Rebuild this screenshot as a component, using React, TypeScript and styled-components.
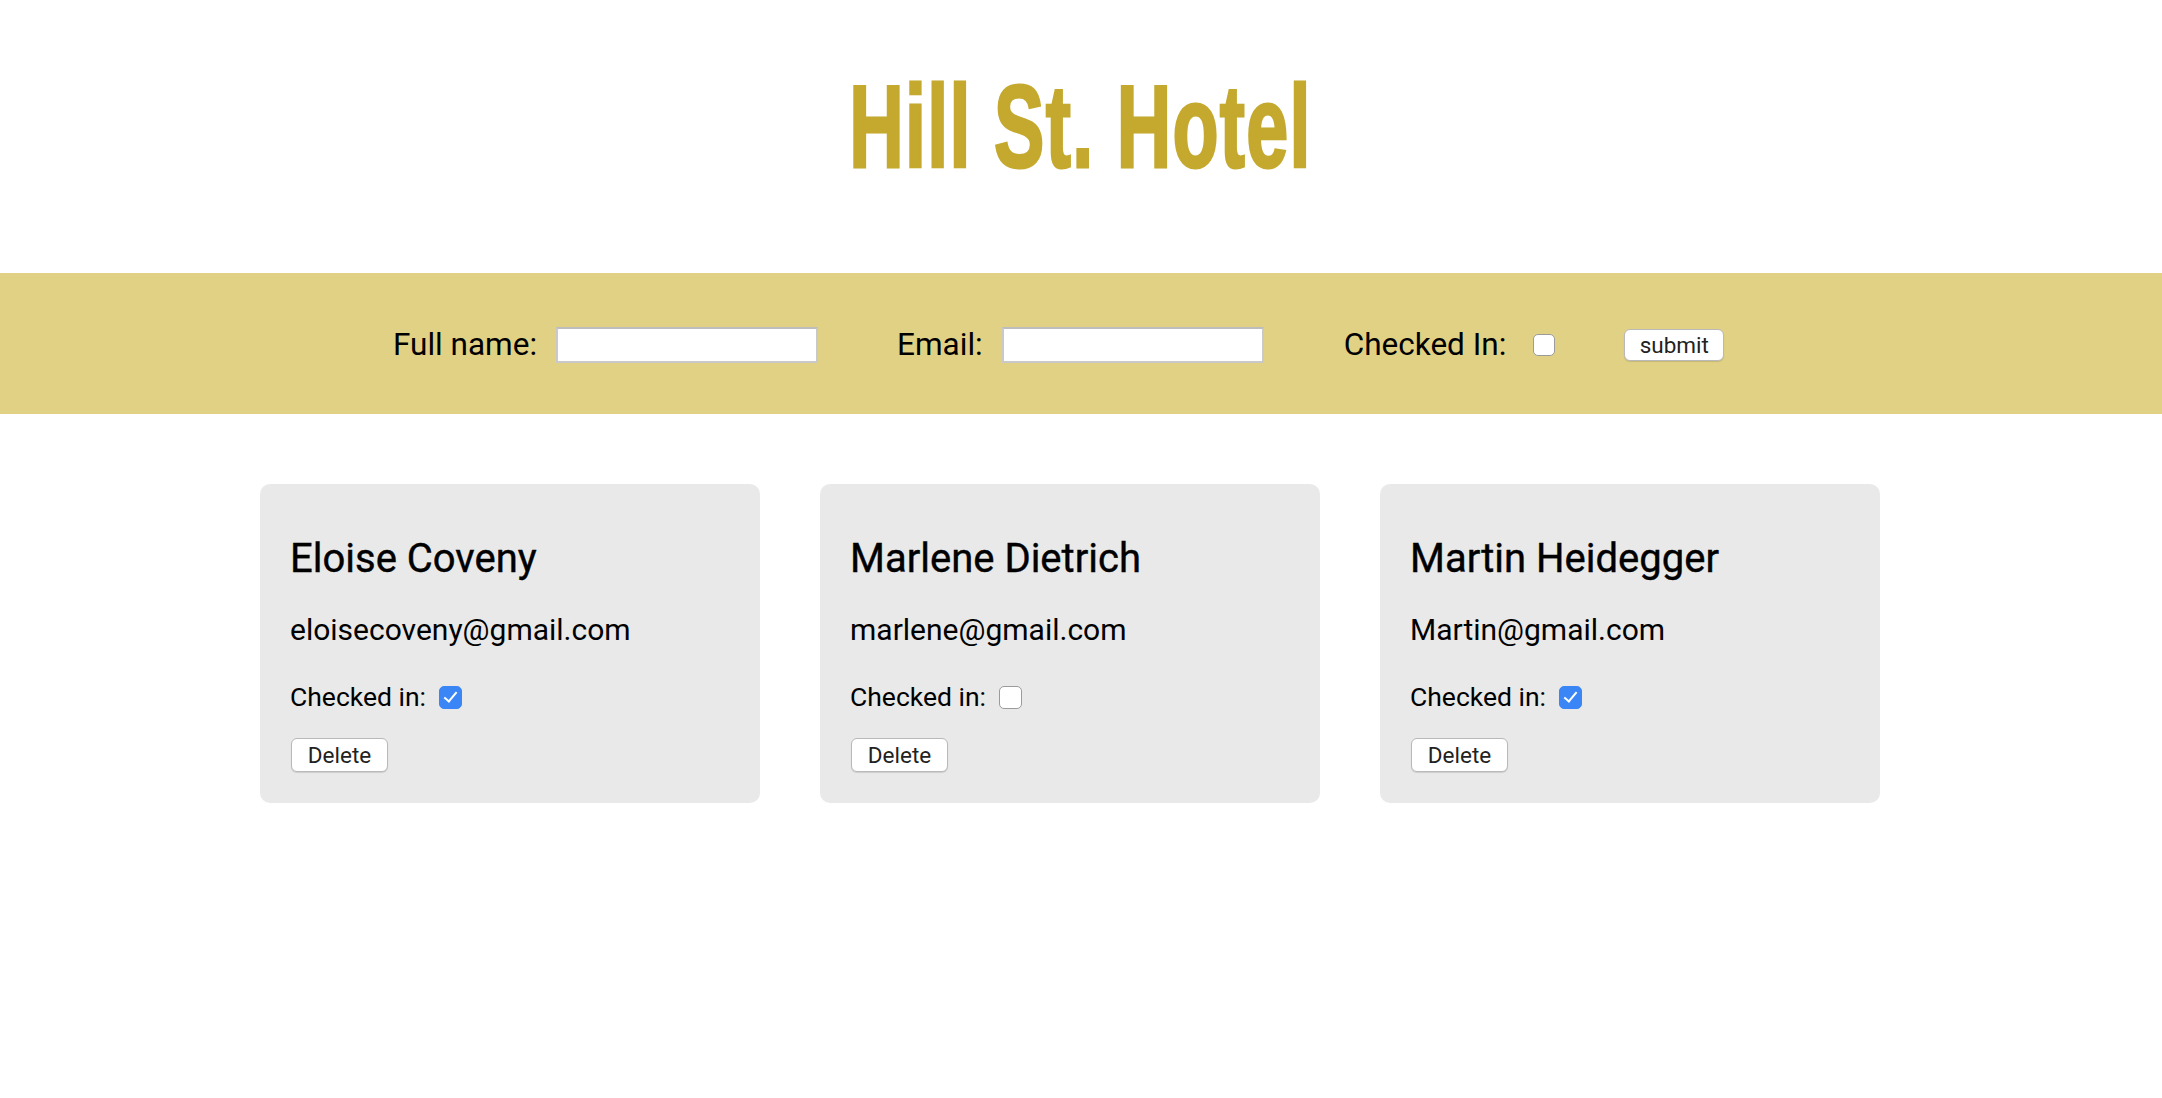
import styled, { createGlobalStyle } from "styled-components";

const GlobalStyle = createGlobalStyle`
  html, body {
    margin: 0;
    padding: 0;
    background: #ffffff;
    font-family: Roboto, "Liberation Sans", sans-serif;
    color: #000;
  }
`;

const Header = styled.header`
  height: 273px;
  padding-top: 62px;
  box-sizing: border-box;
  text-align: center;
`;

const Title = styled.h1`
  display: inline-block;
  margin: 0;
  font-family: "Liberation Sans", Arial, sans-serif;
  font-weight: 700;
  font-size: 117px;
  line-height: 130px;
  color: #c4a92e;
  transform: scaleX(0.645);
  -webkit-text-stroke: 3px #c4a92e;
  letter-spacing: 2px;
`;

const Band = styled.div`
  height: 141px;
  background: #e1d184;
  display: flex;
  align-items: center;
  padding: 2px 0 0 393px;
  box-sizing: border-box;
`;

const Field = styled.label<{ $space: number; $gap?: number }>`
  display: flex;
  align-items: center;
  gap: ${(p) => p.$gap ?? 19}px;
  margin-right: ${(p) => p.$space}px;
  font-size: 31.5px;
`;

const TextInput = styled.input`
  width: 262px;
  height: 36px;
  box-sizing: border-box;
  border: 2px solid #c9c9c9;
  border-top-color: #bdbdbd;
  background: #fff;
  padding: 0 4px;
  font: inherit;
  font-size: 18px;
`;

const Check = styled.input<{ $size: number }>`
  appearance: none;
  -webkit-appearance: none;
  margin: 0;
  width: ${(p) => p.$size}px;
  height: ${(p) => p.$size}px;
  box-sizing: border-box;
  border: 1px solid #9b9b9b;
  border-radius: 5px;
  background: #fff;
  position: relative;

  &:checked {
    background: #3b86f7;
    border-color: #3b86f7;
  }
  &:checked::after {
    content: "";
    position: absolute;
    left: 7px;
    top: 2px;
    width: 5px;
    height: 11px;
    border: solid #fff;
    border-width: 0 2.5px 2.5px 0;
    transform: rotate(40deg);
  }
`;

const Button = styled.button<{ $w: number; $h: number }>`
  width: ${(p) => p.$w}px;
  height: ${(p) => p.$h}px;
  padding: 0;
  background: #fff;
  border: 1px solid #b9b9b9;
  border-radius: 6px;
  box-shadow: 0 1px 1px rgba(0, 0, 0, 0.12);
  font-family: Roboto, "Liberation Sans", sans-serif;
  font-size: 22.5px;
  color: #222;
`;

const Cards = styled.main`
  display: flex;
  gap: 60px;
  padding: 70px 0 0 260px;
`;

const Card = styled.section`
  width: 500px;
  height: 319px;
  box-sizing: border-box;
  background: #e9e9e9;
  border-radius: 10px;
  padding: 52px 30px 0;
`;

const Name = styled.h2`
  margin: 0;
  font-weight: 400;
  font-size: 40px;
  line-height: 46px;
  -webkit-text-stroke: 0.4px #000;
`;

const Email = styled.p`
  margin: 30px 0 0;
  font-size: 30px;
  line-height: 36px;
`;

const CheckRow = styled.div`
  margin-top: 33px;
  display: flex;
  align-items: center;
  gap: 13px;
  font-size: 26.5px;
  line-height: 32px;
`;

const Actions = styled.div`
  margin-top: 25px;
  padding-left: 1px;
`;

const guests = [
  { name: "Eloise Coveny", email: "eloisecoveny@gmail.com", checked: true },
  { name: "Marlene Dietrich", email: "marlene@gmail.com", checked: false },
  { name: "Martin Heidegger", email: "Martin@gmail.com", checked: true },
];

export default function App() {
  return (
    <>
      <GlobalStyle />
      <Header>
        <Title>Hill St. Hotel</Title>
      </Header>
      <Band>
        <Field $space={79}>
          Full name:
          <TextInput type="text" />
        </Field>
        <Field $space={80}>
          Email:
          <TextInput type="text" />
        </Field>
        <Field $space={69} $gap={27}>
          Checked In:
          <Check type="checkbox" $size={22} />
        </Field>
        <Button $w={100} $h={32}>submit</Button>
      </Band>
      <Cards>
        {guests.map((g) => (
          <Card key={g.name}>
            <Name>{g.name}</Name>
            <Email>{g.email}</Email>
            <CheckRow>
              Checked in:
              <Check type="checkbox" $size={23} defaultChecked={g.checked} />
            </CheckRow>
            <Actions>
              <Button $w={97} $h={34}>Delete</Button>
            </Actions>
          </Card>
        ))}
      </Cards>
    </>
  );
}
